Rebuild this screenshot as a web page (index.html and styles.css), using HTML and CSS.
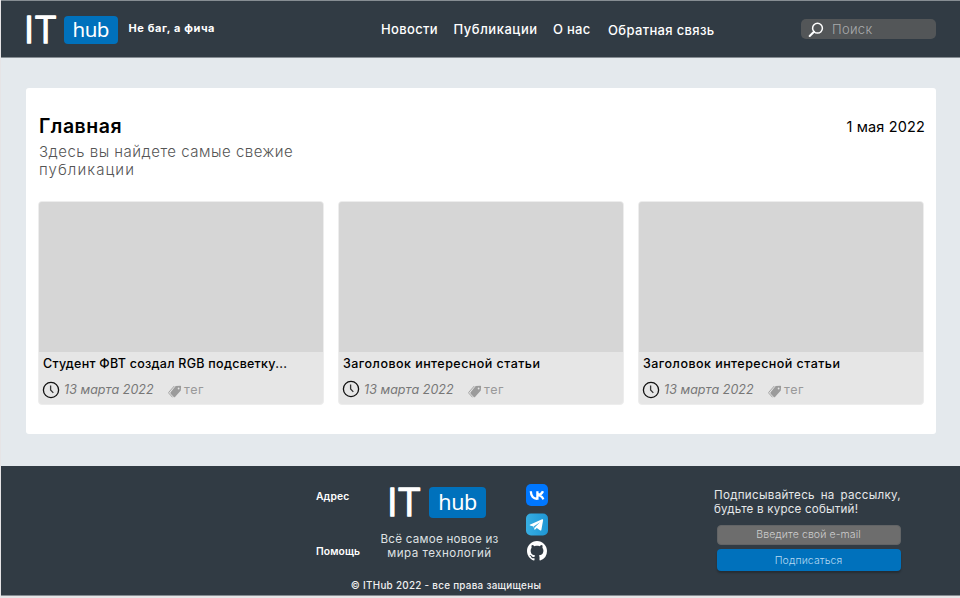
FILE: index.html
```html
<!DOCTYPE html>
<html lang="ru">
<head>
<meta charset="utf-8">
<title>IT hub</title>
<link rel="stylesheet" href="styles.css">
</head>
<body>
<svg class="defs" width="0" height="0">
  <symbol id="clock" viewBox="0 0 18 18"><circle cx="9" cy="9" r="7.600" fill="none" stroke="#111" stroke-width="1.300"/><path d="M8.600 4.500V9l2.700 2.900" fill="none" stroke="#333" stroke-width="1.300"/></symbol>
  <symbol id="tag" viewBox="0 0 14 13"><path d="M7.700.9 12.300.7Q13.200.7 13.100 1.700L12.800 5.500 7 12Q6.400 12.600 5.800 12L2.700 8.700Q2 8 2.600 7.300Z" fill="#9b9b9b"/><circle cx="10.600" cy="3.500" r=".9" fill="#e6e6e6"/><path d="M6.300 1 1 7Q.4 7.700 1 8.400L4.500 12.300" fill="none" stroke="#9b9b9b" stroke-width=".9"/></symbol>
</svg>
<header class="header">
  <div class="brand">
    <svg class="brand-it" width="33" height="32" viewBox="0 0 33 32"><text x="-1.800" y="28">I</text><text x="7.900" y="28">T</text></svg>
    <span class="hub">hub</span>
  </div>
  <span class="slogan">Не баг, а фича</span>
  <nav class="nav">
    <a class="news">Новости</a><a class="pubs">Публикации</a><a class="about">О нас</a><a class="feedback">Обратная связь</a>
  </nav>
  <div class="search">
    <svg width="16" height="16" viewBox="0 0 16 16"><circle cx="9.500" cy="6.200" r="4.900" fill="none" stroke="#fff" stroke-width="1.500"/><path d="M6 9.800 1.700 14" stroke="#fff" stroke-width="2.100" stroke-linecap="round"/></svg>
    <span>Поиск</span>
  </div>
</header>
<main class="panel">
  <div class="intro">
    <div>
      <h1>Главная</h1>
      <p class="lead">Здесь вы найдете самые свежие<br><span class="wide">публикации</span></p>
    </div>
    <time class="today">1 мая 2022</time>
  </div>
  <div class="cards">
    <article class="card">
      <div class="cover"></div>
      <h2 class="long">Студент ФВТ создал RGB подсветку...</h2>
      <div class="meta"><svg class="clock"><use href="#clock"/></svg><time>13 марта 2022</time><svg class="tag"><use href="#tag"/></svg><span>тег</span></div>
    </article>
    <article class="card">
      <div class="cover"></div>
      <h2>Заголовок интересной статьи</h2>
      <div class="meta"><svg class="clock raised"><use href="#clock"/></svg><time>13 марта 2022</time><svg class="tag"><use href="#tag"/></svg><span>тег</span></div>
    </article>
    <article class="card">
      <div class="cover"></div>
      <h2>Заголовок интересной статьи</h2>
      <div class="meta"><svg class="clock"><use href="#clock"/></svg><time>13 марта 2022</time><svg class="tag"><use href="#tag"/></svg><span>тег</span></div>
    </article>
  </div>
</main>
<footer class="footer">
  <div class="links"><a>Адрес</a><a>Помощь</a></div>
  <div class="about-site">
    <div class="brand large">
      <svg class="brand-it" width="35" height="34" viewBox="0 0 35 34"><text x="-.700" y="30.700">I</text><text x="8.900" y="30.700">T</text></svg>
      <span class="hub">hub</span>
    </div>
    <p class="motto"><span>Всё самое новое из</span><br><span class="wide">мира технологий</span></p>
    <p class="copy">© ITHub 2022 - все права защищены</p>
  </div>
  <div class="social">
    <svg width="22" height="22" viewBox="0 0 22 22"><rect width="22" height="22" rx="5" fill="#07f"/><path d="M4.800 7.300C5 12.500 7.500 15 11.400 14.700V7.300M17 7.300C16.100 9.500 14.600 10.900 11.500 11.100 14.500 11.400 16.400 12.600 17.300 15.300" fill="none" stroke="#fff" stroke-width="2.300"/></svg>
    <svg width="22" height="23" viewBox="0 0 22 23"><defs><linearGradient id="tg"><stop stop-color="#37aee2"/><stop offset="1" stop-color="#1e96d4"/></linearGradient></defs><rect y=".5" width="22" height="22" rx="5" fill="url(#tg)"/><path d="M3.800 11.700 16.100 6.200Q17.300 5.900 17.100 7.200L15.400 16.700Q15.100 18 13.900 17.300L10.800 15 9.200 16.500Q8.400 17 8.200 16L7.500 13.500 4 12.400Q3.300 12.100 3.800 11.700Z" fill="#fff"/><path d="M7.900 13.300 14 9.200 9.200 13.900 8.800 16" fill="#38a8df"/></svg>
    <svg width="22" height="22" viewBox="-.8 -.8 17.600 17.600"><path fill="#fff" d="M8 0C3.580 0 0 3.580 0 8c0 3.540 2.290 6.530 5.470 7.590.4.070.55-.17.55-.38 0-.19-.01-.82-.01-1.490-2.010.37-2.530-.49-2.690-.94-.09-.23-.48-.94-.82-1.130-.28-.15-.68-.52-.01-.53.63-.01 1.080.58 1.230.82.72 1.210 1.870.87 2.330.66.07-.52.28-.87.51-1.070-1.780-.2-3.640-.89-3.640-3.950 0-.87.31-1.590.82-2.150-.08-.2-.36-1.020.08-2.120 0 0 .67-.21 2.200.82.64-.18 1.320-.27 2-.27s1.360.09 2 .27c1.530-1.040 2.200-.82 2.200-.82.44 1.100.16 1.920.08 2.120.51.56.82 1.270.82 2.150 0 3.070-1.870 3.750-3.650 3.950.29.25.54.73.54 1.480 0 1.070-.01 1.930-.01 2.200 0 .21.15.46.55.38A8.010 8.010 0 0 0 16 8c0-4.420-3.580-8-8-8Z"/></svg>
  </div>
  <div class="subscribe">
    <p><span class="justified"><span>Подписывайтесь</span><span>на</span><span>рассылку,</span></span><span class="second">будьте в курсе событий!</span></p>
    <div class="email">Введите свой e-mail</div>
    <div class="send">Подписаться</div>
  </div>
</footer>
</body>
</html>
```
FILE: styles.css
```css
* { box-sizing: border-box; }
body {
  margin: 0;
  height: 598px;
  overflow: hidden;
  display: flex;
  flex-direction: column;
  background: #e4e9ed;
  border-left: 1px solid #e6e4e6;
  border-bottom: 2px solid #e6e4e6;
  font-family: Inter, "Open Sans", sans-serif;
  color: #000;
}
h1, h2, p { margin: 0; }
svg { display: block; flex: none; }
.defs { position: absolute; }

.header {
  height: 58px;
  flex: none;
  background: #313b44;
  border-top: 1px solid #868d93;
  border-bottom: 1px solid #868d93;
  display: flex;
  color: #fff;
  padding-left: 25px;
}
.brand { display: flex; margin-top: 14px; height: 32px; }
.brand-it { overflow: visible; }
.brand-it text {
  font: 300 36.500px Inter, sans-serif;
  fill: #fff;
  stroke: #fff;
  stroke-width: 1.700px;
  stroke-linejoin: round;
}
.hub {
  width: 53.500px;
  height: 28px;
  margin: 1px 0 0 5px;
  border-radius: 4px;
  background: #0071bc;
  color: #fff;
  font: 20.500px/27px "Noto Sans", sans-serif;
  letter-spacing: -.5px;
  text-align: center;
}
.slogan {
  width: 100px;
  margin: 19px 0 0 11px;
  font-size: 11px;
  line-height: 17px;
  font-weight: 700;
  letter-spacing: .6px;
  white-space: nowrap;
}
.nav {
  display: flex;
  margin: 19px 0 0 152.500px;
  width: 420px;
  font-size: 13px;
  line-height: 18px;
  font-weight: 500;
  white-space: nowrap;
}
.news { width: 72.500px; letter-spacing: .35px; }
.pubs { width: 99.500px; letter-spacing: .54px; }
.about { width: 55px; letter-spacing: .26px; }
.feedback { padding-top: 1px; letter-spacing: .34px; }
.search {
  width: 135px;
  height: 20px;
  margin-top: 18px;
  border-radius: 5px;
  background: #535658;
  display: flex;
  padding-left: 7px;
  font-size: 13px;
  line-height: 20px;
  font-weight: 300;
  letter-spacing: .3px;
  color: #a9abac;
}
.search svg { margin: 3px 8px 0 0; }

.panel {
  width: 910px;
  height: 345.500px;
  margin: 30px 0 32.500px 25px;
  flex: none;
  border-radius: 3px;
  background: #fff;
  padding: 26px 11px 0 12px;
}
.intro { display: flex; justify-content: space-between; height: 87px; padding-left: 1px; }
h1 { font-size: 19.500px; line-height: 24px; font-weight: 600; letter-spacing: .5px; }
.lead { margin-top: 5px; font-size: 15px; line-height: 18px; font-weight: 300; letter-spacing: .5px; color: #555; }
.lead .wide { letter-spacing: 1.080px; }
.today { font-size: 14.500px; line-height: 25px; letter-spacing: .15px; }
.cards { display: flex; gap: 14px; }
.card { width: 286px; height: 204px; border-radius: 4px; background: #e6e6e6; border: 1px solid #ededed; }
.cover { height: 150px; background: #d6d6d6; border-radius: 3px 3px 0 0; }
.card h2 { margin: 4px 0 0 4px; font-size: 12.500px; line-height: 16px; font-weight: 500; letter-spacing: .46px; white-space: nowrap; }
.card h2.long { letter-spacing: .26px; }
.meta { display: flex; margin: 8px 0 0 3px; font-size: 12.500px; line-height: 20px; color: #777; }
.clock { width: 18px; height: 18px; margin: 1px 4px 0 0; }
.clock.raised { margin-top: 0; }
.meta time { width: 106px; font-style: italic; letter-spacing: .05px; white-space: nowrap; }
.tag { width: 14px; height: 13px; margin: 5px 2px 0 -2px; }
.meta span { color: #999; letter-spacing: .6px; }

.footer {
  height: 130px;
  flex: none;
  background: #313b44;
  border-bottom: 1px solid #868d93;
  display: flex;
  color: #fff;
}
.links { width: 35px; margin: 22px 0 0 315px; display: flex; flex-direction: column; gap: 39px; font-size: 10.300px; line-height: 16px; font-weight: 600; letter-spacing: .12px; }
.about-site { width: 190px; display: flex; flex-direction: column; align-items: center; }
.large { margin: 19px 0 0 -18px; height: 34px; }
.large .brand-it text { font-size: 38.500px; }
.large .hub { width: 57px; height: 31px; margin: 1.500px 0 0 6px; font-size: 21.500px; line-height: 30px; }
.motto { width: 130px; margin: 13px 0 0 -13px; font-size: 11.600px; line-height: 14px; text-align: center; letter-spacing: .27px; color: #dfe1e3; }
.motto .wide { letter-spacing: .48px; }
.copy { margin-top: 18px; font-size: 9.900px; line-height: 14px; font-weight: 500; letter-spacing: .28px; white-space: nowrap; color: #f0f0f0; }
.social { margin: 18px 0 0 -15px; display: flex; flex-direction: column; gap: 6.500px; }
.social svg:last-child { margin-top: -2.500px; }
.subscribe { width: 187px; margin: 22px 0 0 166px; font-size: 11.600px; line-height: 14px; color: #e6e8e9; }
.justified { display: flex; justify-content: space-between; letter-spacing: .3px; }
.second { display: block; letter-spacing: .2px; }
.email, .send { width: 184px; margin-left: 2.500px; border-radius: 4px; text-align: center; font-size: 10.500px; font-weight: 300; letter-spacing: .1px; }
.email { height: 20px; margin-top: 9px; line-height: 17px; background: #6d6d6d; border: 1px solid #626466; color: #cfcfcf; }
.send { height: 22px; margin-top: 4px; line-height: 23px; background: #0071bc; color: #b5d9f2; box-shadow: 0 2px 2px rgba(0, 0, 0, .25); }
```
